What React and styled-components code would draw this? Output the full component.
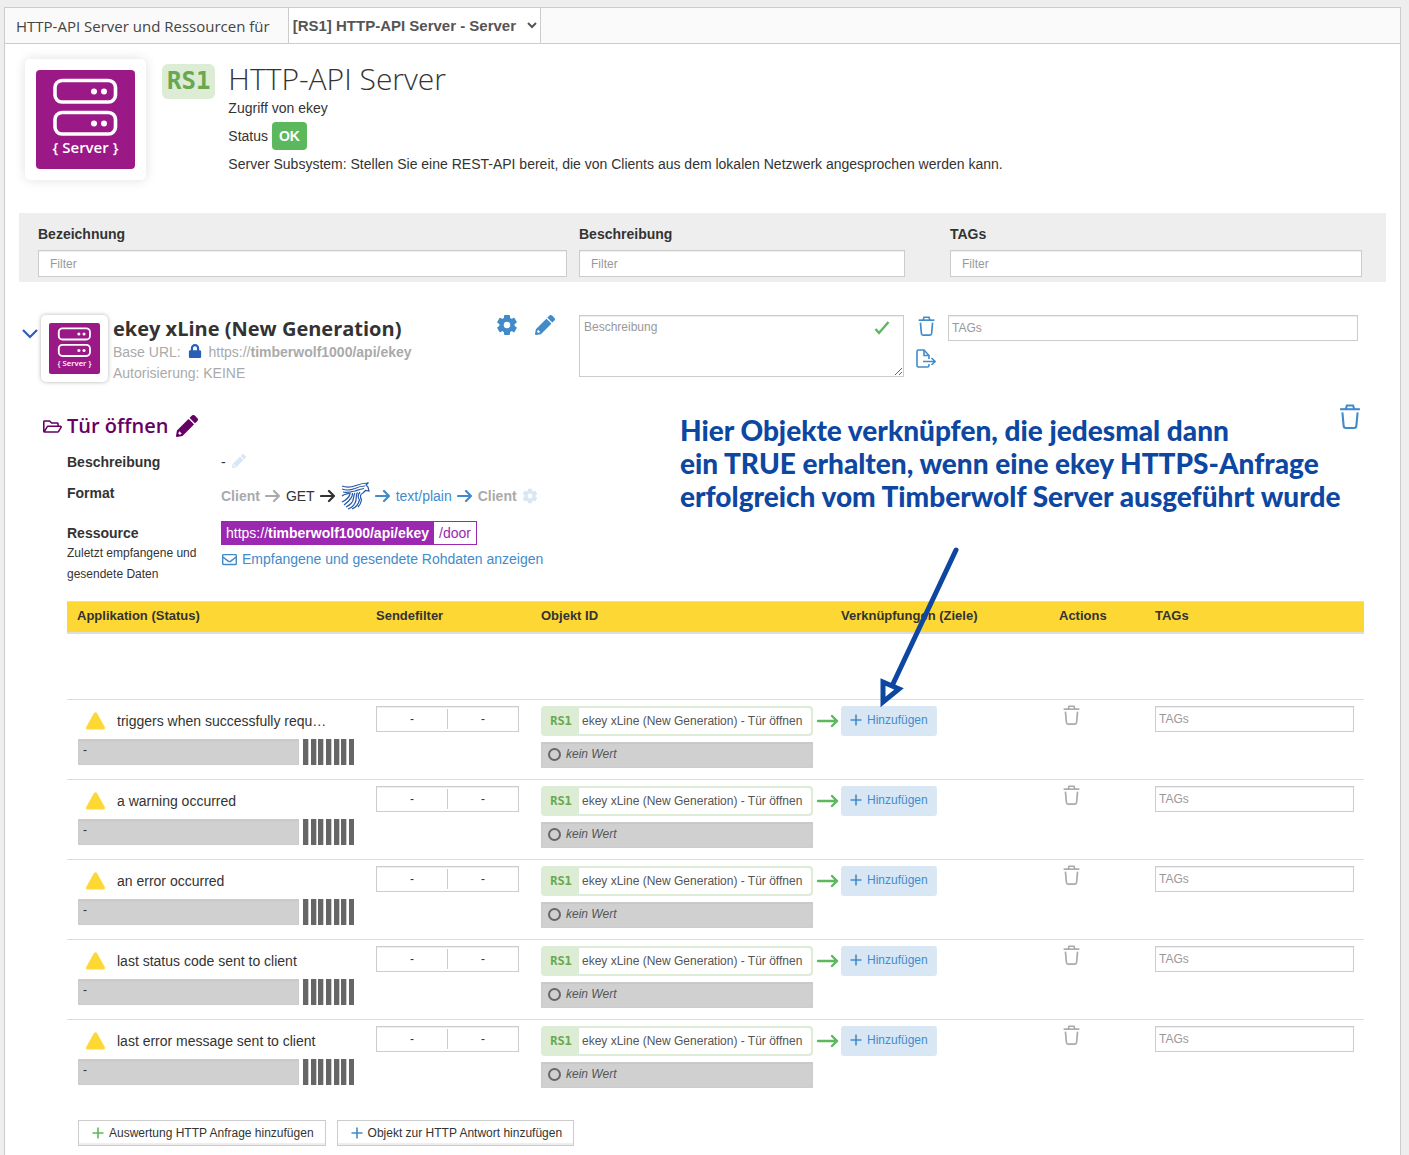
import styled, { createGlobalStyle, css } from "styled-components";
import { FaLock, FaRegEnvelope, FaRegFolderOpen } from "react-icons/fa";

const sans = `"Liberation Sans", Arial, sans-serif`;
const heading = `"Open Sans", sans-serif`;
const mono = `"DejaVu Sans Mono", monospace`;

const rows = [
  "triggers when successfully requ…",
  "a warning occurred",
  "an error occurred",
  "last status code sent to client",
  "last error message sent to client",
];

const columns = [299, 165, 300, 218, 96, 219];

//icons
const Trash = ({ width = 19, height = 24 }) => (
  <svg width={width} height={height} viewBox="0 0 19 24" fill="none" stroke="currentColor">
    <path d="M0 5H19" strokeWidth="2" />
    <path d="M5.5 5L6.5 1.5H12.5L13.5 5" strokeWidth="2" />
    <path
      d="M2.2 8L3.4 21C3.5 22.4 4.2 23 5.4 23H13.6C14.8 23 15.5 22.4 15.6 21L16.8 8"
      strokeWidth="2"
    />
  </svg>
);

const Pencil = ({ size }) => (
  <svg width={size} height={size} viewBox="0 0 512 512" fill="currentColor">
    <path d="M498 142l-46 46c-5 5-13 5-17 0L324 77c-5-5-5-12 0-17l46-46c19-19 49-19 68 0l60 60c19 19 19 49 0 68z" />
    <path
      fillRule="evenodd"
      d="M284 100L22 362 0 484c-3 16 11 31 28 28l122-22 262-262c5-5 5-13 0-17L301 100c-5-5-12-5-17 0zM76 376l60 60-54 22-28-28z"
    />
  </svg>
);

const Gear = ({ size }) => (
  <svg width={size} height={size} viewBox="0 0 22 22" fill="currentColor">
    {[0, 60, 120, 180, 240, 300].map((angle) => (
      <rect key={angle} x="8" y="1" width="6" height="6" rx="1" transform={`rotate(${angle} 11 11)`} />
    ))}
    <circle cx="11" cy="11" r="5.5" fill="none" stroke="currentColor" strokeWidth="4.400" />
  </svg>
);

const Arrow = ({ width = 16, weight = 2.2 }) => (
  <svg width={width} height="14" viewBox={`0 0 ${width} 14`} fill="none" stroke="currentColor" strokeWidth={weight}>
    <path
      d={`M1 7H${width - 2}M${width - 7} 2L${width - 2} 7L${width - 7} 12`}
      strokeLinecap="round"
      strokeLinejoin="round"
    />
  </svg>
);

const Plus = ({ color }) => (
  <svg width="12" height="12" viewBox="0 0 12 12" stroke={color} strokeWidth="1.6">
    <path d="M6 0.5V11.5M0.5 6H11.5" />
  </svg>
);

const Chevron = () => (
  <svg width="16" height="10" viewBox="0 0 16 10" fill="none" stroke="#2a5fb8" strokeWidth="2.2">
    <path d="M1 1L8 8L15 1" />
  </svg>
);

const Check = () => (
  <svg width="16" height="14" viewBox="0 0 16 14" fill="none" stroke="#5cb85c" strokeWidth="2.4">
    <path d="M1.500 8L5 12L14.500 1" />
  </svg>
);

const FileExport = () => (
  <svg width="20" height="19" viewBox="0 0 20 19" fill="none" stroke="currentColor" strokeWidth="1.6">
    <path d="M13 15V16.500C13 17.500 12.500 18 11.500 18H2.500C1.500 18 1 17.500 1 16.500V2.500C1 1.500 1.500 1 2.500 1H8L13 6.500V10" />
    <path d="M8 1V6.500H13M7 12.500H18.500M15.500 9L19 12.500L15.500 16" />
  </svg>
);

const Warning = () => (
  <svg width="19" height="18" viewBox="0 0 19 18" fill="#fdd835">
    <path d="M7.900 1.200C8.600 0 10.400 0 11.100 1.200L18.600 14.800C19.400 16.300 18.600 17.500 17 17.500H2C0.400 17.500 -0.400 16.300 0.400 14.800Z" />
  </svg>
);

const Wolf = () => (
  <svg width="29" height="28" viewBox="0 0 29 28" fill="none" stroke="#2457a8" strokeWidth="1.200">
    <path d="M1 4C6 6 11 5 15 3.500C19 2 22 1 27 1L25 3L27 5L28 9L24.500 8.500L22 11" />
    <path d="M1 7C5 8.500 10 8 14 6.500C17 5 20 4 24 4" />
    <path d="M2 10C6 11 10 10 14 9C17 8 19 7 23 6.500" />
    <path d="M1 14C4 11.500 7 12 10 11" />
    <path d="M9 12C8 16 5 18 1 20" />
    <path d="M11.500 11C12 16 7 20 3 23" />
    <path d="M14 11C11.500 14 14 18 10 21.500C8.500 23 7 24 5 25" />
    <path d="M16.500 10.500C14 13 16.500 17 14 21C12.500 24 10 26 7 27" />
    <path d="M19 10C16.500 13 17 16 18.500 18C17.500 22 16 25 11 27" />
    <path d="M22 11C19.500 12 18.500 14 20.500 18C20 21 19 23 17 25" />
  </svg>
);

const ServerLogo = ({ size }) => (
  <svg width={size} height={size} viewBox="0 0 99 99">
    <rect width="99" height="99" rx="4" fill="#9a1987" />
    <g fill="none" stroke="#fff" strokeWidth="3.600">
      <rect x="19" y="10.500" width="60.500" height="21.500" rx="7" />
      <rect x="19" y="42.500" width="60.500" height="21.500" rx="7" />
    </g>
    <g fill="#fff">
      <circle cx="58" cy="21.500" r="3" />
      <circle cx="68" cy="21.500" r="3" />
      <circle cx="58" cy="53.500" r="3" />
      <circle cx="68" cy="53.500" r="3" />
      <text x="49.500" y="83" textAnchor="middle" fontFamily="Open Sans" fontWeight="600" fontSize="15">
        {"{ Server }"}
      </text>
    </g>
  </svg>
);

const App = () => {
  return (
    <>
      <GlobalStyle />
      <Page>
        <TopBar>
          <label htmlFor="server">HTTP-API Server und Ressourcen für</label>
          <ServerSelect id="server">
            <option>[RS1] HTTP-API Server - Server</option>
          </ServerSelect>
        </TopBar>
        <Panel>
          <Intro>
            <LogoCard>
              <ServerLogo size={99} />
            </LogoCard>
            <Badge>RS1</Badge>
            <div>
              <h1>HTTP-API Server</h1>
              <p>Zugriff von ekey</p>
              <p>
                Status <Ok>OK</Ok>
              </p>
              <p>
                Server Subsystem: Stellen Sie eine REST-API bereit, die von
                Clients aus dem lokalen Netzwerk angesprochen werden kann.
              </p>
            </div>
          </Intro>

          <FilterBar>
            <label>
              Bezeichnung
              <FilterInput placeholder="Filter" />
            </label>
            <label>
              Beschreibung
              <FilterInput placeholder="Filter" />
            </label>
            <label>
              TAGs
              <FilterInput placeholder="Filter" />
            </label>
          </FilterBar>

          <Entry>
            <EntryName>
              <Toggle aria-label="Zuklappen">
                <Chevron />
              </Toggle>
              <LogoCard $small>
                <ServerLogo size={51} />
              </LogoCard>
              <EntryText>
                <h2>ekey xLine (New Generation)</h2>
                <p>
                  Base URL: <FaLock color="#2a5fb8" size={14} /> https://
                  <b>timberwolf1000/api/ekey</b>
                </p>
                <p>Autorisierung: KEINE</p>
              </EntryText>
              <EntryTools>
                <IconButton aria-label="Einstellungen">
                  <Gear size={22} />
                </IconButton>
                <IconButton aria-label="Bearbeiten">
                  <Pencil size={20} />
                </IconButton>
              </EntryTools>
            </EntryName>
            <EntryNote>
              <NoteBox>
                <textarea aria-label="Beschreibung" placeholder="Beschreibung" />
                <Check />
              </NoteBox>
              <NoteTools>
                <IconButton aria-label="Löschen">
                  <Trash width={17} height={20} />
                </IconButton>
                <IconButton aria-label="Exportieren">
                  <FileExport />
                </IconButton>
              </NoteTools>
            </EntryNote>
            <TagInput aria-label="TAGs" placeholder="TAGs" />
          </Entry>

          <Resource>
            <ResourceHead>
              <FaRegFolderOpen size={19} />
              <h3>Tür öffnen</h3>
              <IconButton aria-label="Umbenennen" $color="#660066">
                <Pencil size={22} />
              </IconButton>
              <IconButton aria-label="Ressource löschen">
                <Trash width={20} height={25} />
              </IconButton>
            </ResourceHead>
            <Details>
              <dt>Beschreibung</dt>
              <dd>
                -
                <IconButton aria-label="Beschreibung bearbeiten" $color="#d9e7f5">
                  <Pencil size={14} />
                </IconButton>
              </dd>
              <dt>Format</dt>
              <Flow>
                <Muted>
                  Client <Arrow />
                </Muted>
                <span>
                  GET <Arrow />
                </span>
                <Wolf />
                <Blue>
                  <Arrow /> text/plain <Arrow />
                </Blue>
                <Muted>
                  Client
                  <IconButton aria-label="Format einstellen" $color="#d9e7f5">
                    <Gear size={16} />
                  </IconButton>
                </Muted>
              </Flow>
              <dt>
                Ressource
                <small>Zuletzt empfangene und gesendete Daten</small>
              </dt>
              <dd>
                <div>
                  <Url>
                    <span>
                      https://<b>timberwolf1000/api/ekey</b>
                    </span>
                    <em>/door</em>
                  </Url>
                  <RawLink href="#rohdaten">
                    <FaRegEnvelope size={15} />
                    Empfangene und gesendete Rohdaten anzeigen
                  </RawLink>
                </div>
              </dd>
            </Details>

            <Table>
              <colgroup>
                {columns.map((width, i) => (
                  <col key={i} width={width} />
                ))}
              </colgroup>
              <thead>
                <tr>
                  <th>Applikation (Status)</th>
                  <th>Sendefilter</th>
                  <th>Objekt ID</th>
                  <th>Verknüpfungen (Ziele)</th>
                  <th>Actions</th>
                  <th>TAGs</th>
                </tr>
              </thead>
              <tbody>
                <Spacer>
                  <td colSpan={6}></td>
                </Spacer>
                {rows.map((name) => (
                  <Row key={name} name={name} />
                ))}
              </tbody>
            </Table>
            <Footer>
              <AddButton>
                <Plus color="#5cb85c" />
                Auswertung HTTP Anfrage hinzufügen
              </AddButton>
              <AddButton>
                <Plus color="#428bca" />
                Objekt zur HTTP Antwort hinzufügen
              </AddButton>
            </Footer>

            <Hint>
              Hier Objekte verknüpfen, die jedesmal dann
              <br />
              ein TRUE erhalten, wenn eine ekey HTTPS-Anfrage
              <br />
              erfolgreich vom Timberwolf Server ausgeführt wurde
            </Hint>
            <HintArrow width="84" height="162" viewBox="0 0 84 162">
              <path d="M79 4L15 140" />
              <path d="M6 136L22 143L6 156Z" fill="#fff" />
            </HintArrow>
          </Resource>
        </Panel>
      </Page>
    </>
  );
};

const Row = ({ name }) => (
  <tr>
    <td>
      <Application>
        <Warning />
        <span>{name}</span>
      </Application>
      <Status>
        <span>-</span>
        <Bars>
          {[1, 2, 3, 4, 5, 6, 7].map((n) => (
            <i key={n} />
          ))}
        </Bars>
      </Status>
    </td>
    <td>
      <SendFilter>
        <span>-</span>
        <span>-</span>
      </SendFilter>
    </td>
    <td>
      <ObjectId>
        <strong>RS1</strong>
        <span>ekey xLine (New Generation) - Tür öffnen</span>
      </ObjectId>
      <Value>kein Wert</Value>
    </td>
    <td>
      <Targets>
        <Arrow width={22} weight={2.4} />
        <LinkButton>
          <Plus color="#428bca" />
          Hinzufügen
        </LinkButton>
      </Targets>
    </td>
    <td>
      <IconButton aria-label="Objekt löschen" $color="#aaa">
        <Trash width={17} height={20} />
      </IconButton>
    </td>
    <td>
      <TagInput aria-label="TAGs" placeholder="TAGs" />
    </td>
  </tr>
);

const GlobalStyle = createGlobalStyle`
  *, *::before {
    box-sizing: border-box;
  }
  body {
    margin: 0;
    background: #eee;
    color: #333;
    font: 14px/20px ${sans};
  }
  h1, h2, h3, p, dl, dd {
    margin: 0;
  }
  input, textarea, button, select {
    font-family: ${sans};
    color: inherit;
  }
  svg {
    flex: none;
  }
`;

const field = css`
  border: 1px solid #ccc;
  border-radius: 0;
  background: #fff;
  box-shadow: inset 0 1px 1px rgba(0, 0, 0, 0.075);
  font-size: 12px;

  &::placeholder {
    color: #999;
  }
`;

const Page = styled.div`
  display: flex;
  flex-direction: column;
  min-height: 100vh;
  padding: 7px 8px 0 4px;
`;

const TopBar = styled.div`
  display: flex;
  align-items: center;
  height: 37px;
  padding-left: 11px;
  border: 1px solid #ccc;
  background: #fafafa;
  color: #444;
  font: 15px/20px ${heading};
`;

const ServerSelect = styled.select`
  height: 37px;
  width: 253px;
  margin-left: 18px;
  border: 1px solid #ccc;
  border-radius: 0;
  background: #fff;
  color: #555;
  font-size: 15px;
  font-weight: bold;
`;

const Panel = styled.main`
  flex: 1;
  padding: 15px 14px 9px;
  border: 1px solid #ccc;
  border-width: 0 1px;
  background: #fff;
`;

const Intro = styled.header`
  display: flex;
  align-items: flex-start;
  padding-left: 6px;

  h1 {
    margin-top: 1px;
    font: 300 30px/38px ${heading};
  }
  p {
    margin-bottom: 4px;
  }
`;

const LogoCard = styled.div`
  flex: none;
  display: flex;
  align-items: center;
  justify-content: center;
  width: ${(props) => (props.$small ? 67 : 121)}px;
  height: ${(props) => (props.$small ? 67 : 121)}px;
  border-radius: 5px;
  background: #fff;
  box-shadow: 0 0 ${(props) => (props.$small ? 4 : 12)}px rgba(0, 0, 0, ${(props) => (props.$small ? 0.3 : 0.12)});
`;

const Badge = styled.span`
  margin: 5px 13px 0 16px;
  padding: 0 5px;
  border-radius: 6px;
  background: #dcecd5;
  color: #6aa84f;
  font: bold 24px/35px ${mono};
`;

const Ok = styled.span`
  display: inline-block;
  padding: 4px 7px;
  border-radius: 4px;
  background: #5cb85c;
  color: #fff;
  font-weight: bold;
`;

const grid = css`
  display: grid;
  grid-template-columns: 529fr 359fr 412fr;
  column-gap: 12px;
`;

const FilterBar = styled.div`
  ${grid}
  height: 69px;
  margin-top: 33px;
  padding: 11px 24px 0 19px;
  background: #eee;
  font-weight: bold;

  label:nth-child(2) {
    padding-right: 33px;
  }
`;

const FilterInput = styled.input`
  ${field}
  display: block;
  width: 100%;
  height: 27px;
  margin-top: 6px;
  padding: 0 11px;
`;

const Entry = styled.section`
  ${grid}
  align-items: start;
  margin-top: 33px;
  padding: 0 28px 0 3px;
  grid-template-columns: 545fr 357fr 410fr;
`;

const EntryName = styled.div`
  display: flex;
`;

const IconButton = styled.button`
  display: inline-flex;
  align-self: center;
  padding: 0;
  border: 0;
  background: none;
  color: ${(props) => props.$color || "#428bca"};
  cursor: pointer;
`;

const Toggle = styled(IconButton)`
  align-self: flex-start;
  margin: 14px 3px 0 0;
`;

const EntryText = styled.div`
  flex: 1;
  margin-left: 5px;

  h2 {
    font: bold 20px/27px ${heading};
  }
  p {
    color: #aaa;
    line-height: 21px;
  }
  svg {
    margin: 0 3px;
    vertical-align: -1px;
  }
`;

const EntryTools = styled.div`
  display: flex;
  gap: 17px;
  height: 20px;
  margin-right: 12px;
`;

const EntryNote = styled.div`
  display: flex;
`;

const NoteBox = styled.div`
  position: relative;
  flex: 1;

  textarea {
    ${field}
    display: block;
    width: 100%;
    height: 62px;
    padding: 4px;
  }
  svg {
    position: absolute;
    top: 6px;
    right: 14px;
  }
`;

const NoteTools = styled.div`
  display: flex;
  flex-direction: column;
  gap: 13px;
  width: 32px;
  padding: 1px 0 0 12px;
`;

const TagInput = styled.input`
  ${field}
  display: block;
  width: 100%;
  height: 26px;
  padding: 0 3px;
`;

const Resource = styled.section`
  position: relative;
  margin: 18px 22px 0 24px;
`;

const ResourceHead = styled.div`
  display: flex;
  align-items: center;
  color: #660066;

  h3 {
    margin: 0 8px 0 5px;
    font: 600 20px/48px ${heading};
  }
  button:last-child {
    align-self: flex-start;
    margin: 2px 4px 0 auto;
  }
`;

const Details = styled.dl`
  display: grid;
  grid-template-columns: 140px 1fr;
  column-gap: 14px;
  margin: 2px 0 0 24px;

  dt {
    margin-bottom: 11px;
    font-weight: bold;
  }
  dt:last-of-type {
    margin: 9px 0 16px;
  }
  small {
    display: block;
    font: 12px/21px ${sans};
  }
  dd {
    display: flex;
    align-items: flex-start;
    gap: 6px;
  }
  dd:last-child {
    margin-top: 7px;
  }
  dd > button {
    align-self: flex-start;
    margin-top: 2px;
  }
`;

const Flow = styled.dd`
  height: 20px;
  margin-top: 3px;

  && {
    gap: 5px;
    align-items: center;
  }
  span {
    display: flex;
    align-items: center;
    gap: 5px;
  }
`;

const Muted = styled.span`
  color: #aaa;
  font-weight: bold;
`;

const Blue = styled.span`
  color: #428bca;
`;

const Url = styled.span`
  display: flex;
  width: max-content;
  border: 1px solid #9c27b0;
  line-height: 22px;

  span {
    padding: 0 5px 0 4px;
    background: #9c27b0;
    color: #fff;
  }
  em {
    padding: 0 5px;
    color: #9c27b0;
    font-style: normal;
  }
`;

const RawLink = styled.a`
  display: flex;
  align-items: center;
  gap: 5px;
  margin: 4px 0 0 1px;
  color: #428bca;
  text-decoration: none;
`;

const Table = styled.table`
  width: calc(100% - 24px);
  margin-left: 24px;
  table-layout: fixed;
  border-collapse: collapse;
  font-size: 12px;

  th {
    height: 31px;
    padding: 0 10px 2px;
    border-top: 1px solid #ddd;
    border-bottom: 2px solid #ddd;
    background: #fdd835;
    font-size: 13px;
    line-height: 20px;
    text-align: left;
  }
  td {
    height: 80px;
    padding: 6px 10px 0;
    border-top: 1px solid #ddd;
    vertical-align: top;
  }
  td:nth-child(5) {
    padding: 5px 14px;
  }
`;

const Spacer = styled.tr`
  && td {
    height: 67px;
    border: 0;
  }
`;

const Application = styled.div`
  display: flex;
  align-items: center;
  gap: 12px;
  height: 30px;
  padding-left: 9px;
  font-size: 14px;
  white-space: nowrap;
`;

const Status = styled.div`
  display: flex;
  gap: 4px;
  height: 26px;
  margin: 3px 2px 0 1px;

  > span {
    flex: 1;
    padding-left: 4px;
    border: 1px solid #ccc;
    background: #d0d0d0;
    box-shadow: inset 0 1px 1px rgba(0, 0, 0, 0.05);
  }
`;

const Bars = styled.div`
  display: flex;
  justify-content: space-between;
  width: 51px;

  i {
    width: 6px;
    background: #666;
    border-right: 1px solid #ccc;
  }
  i:last-child {
    width: 5px;
    border: 0;
  }
`;

const SendFilter = styled.div`
  display: flex;
  height: 26px;
  margin-right: 2px;
  padding: 2px 0;
  border: 1px solid #ccc;
  box-shadow: inset 0 1px 1px rgba(0, 0, 0, 0.075);

  span {
    flex: 1;
    text-align: center;
  }
  span + span {
    border-left: 1px solid #ccc;
  }
`;

const ObjectId = styled.div`
  display: flex;
  height: 30px;
  margin-right: 8px;
  padding: 2px;
  border-radius: 4px;
  background: #dcecd5;
  line-height: 26px;

  strong {
    width: 36px;
    color: #6aa84f;
    font: bold 12px/26px ${mono};
    text-align: center;
  }
  span {
    flex: 1;
    padding-left: 3px;
    border-radius: 0 3px 3px 0;
    background: #fff;
    color: #555;
    white-space: nowrap;
  }
`;

const Value = styled.div`
  display: flex;
  align-items: center;
  gap: 5px;
  height: 26px;
  margin: 6px 8px 0 0;
  padding: 0 0 2px 6px;
  border: 1px solid #ccc;
  background: #d0d0d0;
  box-shadow: inset 0 1px 1px rgba(0, 0, 0, 0.05);
  color: #555;
  font-style: italic;

  &::before {
    content: "";
    width: 13px;
    height: 13px;
    border: 2px solid #666;
    border-radius: 50%;
  }
`;

const Targets = styled.div`
  display: flex;
  align-items: center;
  gap: 2px;
  margin-left: -24px;
  color: #5cb85c;
`;

const LinkButton = styled.button`
  display: flex;
  align-items: center;
  gap: 5px;
  height: 30px;
  padding: 0 9px 2px;
  border: 0;
  border-radius: 3px;
  background: #d9e7f5;
  color: #428bca;
  font-size: 12px;
`;

const Footer = styled.div`
  display: flex;
  gap: 11px;
  margin: 20px 0 0 35px;
`;

const AddButton = styled.button`
  ${field}
  display: flex;
  align-items: center;
  gap: 5px;
  height: 26px;
  padding: 0 11px 0 13px;
  box-shadow: inset 0 -2px 1px rgba(0, 0, 0, 0.07);
`;

//note on top of the table
const Hint = styled.p`
  position: absolute;
  top: 12px;
  left: 637px;
  color: #0d47a1;
  font: 900 28px/33px Lato, sans-serif;
  white-space: nowrap;
`;

const HintArrow = styled.svg`
  position: absolute;
  top: 144px;
  left: 834px;
  fill: none;
  stroke: #0d47a1;
  stroke-width: 5px;
  stroke-linecap: round;
`;

export default App;
